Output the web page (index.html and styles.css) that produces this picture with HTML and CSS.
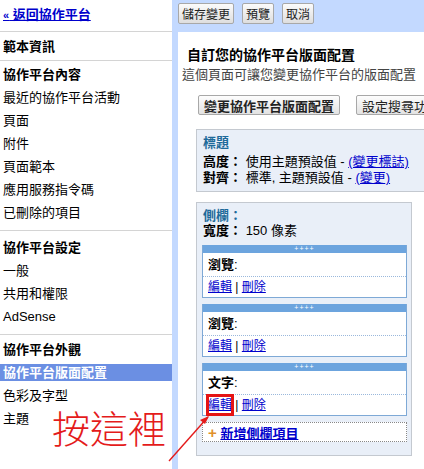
FILE: index.html
```html
<!DOCTYPE html>
<html lang="zh-Hant">
<head>
    <meta charset="UTF-8">
    <meta name="viewport" content="width=device-width, initial-scale=1.0">
    <title>自訂您的協作平台版面配置</title>
    <link rel="stylesheet" href="styles.css">
</head>
<body>
    <div class="page">
        <nav class="side">
            <div class="grp first">
                <a class="back" href="#"><span class="raquo">«</span> 返回協作平台</a>
            </div>
            <div class="grp">
                <div class="hd">範本資訊</div>
            </div>
            <div class="grp">
                <div class="hd">協作平台內容</div>
                <div class="it">最近的協作平台活動</div>
                <div class="it">頁面</div>
                <div class="it">附件</div>
                <div class="it">頁面範本</div>
                <div class="it">應用服務指令碼</div>
                <div class="it">已刪除的項目</div>
            </div>
            <div class="grp set">
                <div class="hd">協作平台設定</div>
                <div class="it">一般</div>
                <div class="it">共用和權限</div>
                <div class="it">AdSense</div>
            </div>
            <div class="grp last">
                <div class="hd">協作平台外觀</div>
                <div class="it sel">協作平台版面配置</div>
                <div class="it">色彩及字型</div>
                <div class="it">主題</div>
            </div>
        </nav>

        <div class="main">
            <div class="toolbar">
                <button class="tb">儲存變更</button>
                <button class="tb">預覽</button>
                <button class="tb">取消</button>
            </div>
            <div class="content">
                <h1 class="title">自訂您的協作平台版面配置</h1>
                <p class="desc">這個頁面可讓您變更協作平台的版面配置</p>
                <div class="actions">
                    <button class="act bold">變更協作平台版面配置</button>
                    <button class="act">設定搜尋功能</button>
                </div>

                <div class="box head-box">
                    <div class="box-title">標題</div>
                    <div class="row"><b>高度：</b> 使用主題預設值 - <a href="#">(變更標誌)</a></div>
                    <div class="row"><b>對齊：</b> 標準, 主題預設值 - <a href="#">(變更)</a></div>
                </div>

                <div class="box side-box">
                    <div class="box-title">側欄：</div>
                    <div class="row"><b>寬度：</b> 150 像素</div>

                    <div class="widget">
                        <div class="grip">++++</div>
                        <div class="w-name"><b>瀏覽</b>:</div>
                        <div class="w-links"><a href="#">編輯</a> | <a href="#">刪除</a></div>
                    </div>
                    <div class="widget">
                        <div class="grip">++++</div>
                        <div class="w-name"><b>瀏覽</b>:</div>
                        <div class="w-links"><a href="#">編輯</a> | <a href="#">刪除</a></div>
                    </div>
                    <div class="widget">
                        <div class="grip">++++</div>
                        <div class="w-name"><b>文字</b>:</div>
                        <div class="w-links"><a class="mark" href="#">編輯</a> | <a href="#">刪除</a></div>
                    </div>

                    <div class="add">
                        <span class="plus">+</span> <a href="#">新增側欄項目</a>
                    </div>
                </div>
            </div>
        </div>

        <div class="note">按這裡</div>
        <svg class="arrow" width="60" height="60" viewBox="0 0 60 60">
            <line x1="7" y1="56" x2="46" y2="12" stroke="#e41b1b" stroke-width="1.4"/>
            <path d="M47 11 L38 15 L43 19 Z" fill="#e41b1b"/>
        </svg>
    </div>
</body>
</html>
```

FILE: styles.css
```css
body{
    margin: 0;
    font-family: "Liberation Sans", "Noto Sans CJK TC", sans-serif;
    font-size: 13px;
    color: #000;
    overflow: hidden;
}
a{
    color: #0000cc;
}
.page{
    position: relative;
    display: flex;
    height: 469px;
}

/* left menu */
.side{
    width: 172px;
    flex-shrink: 0;
    background: #fff;
}
.grp{
    display: flex;
    flex-direction: column;
    gap: 6px;
    padding: 5px 0 9px;
    border-bottom: 1px solid #d4d4d4;
    line-height: 17px;
}
.grp.first{
    padding: 6px 0 7px;
}
.grp.first + .grp{
    padding: 6px 0 5px;
}
.grp.set{
    padding: 8px 0 9px;
}
.grp.last{
    padding: 6px 0;
    border-bottom: none;
}
.back{
    padding-left: 3px;
    font-weight: bold;
}
.raquo{
    font-size: 11px;
}
.hd{
    padding-left: 3px;
    font-weight: bold;
}
.it{
    padding-left: 3px;
}
.it.sel{
    background: #6b8fe3;
    color: #fff;
    font-weight: bold;
}

/* right side */
.main{
    flex: 1;
    display: flex;
    flex-direction: column;
    background: #c3d9ff;
    min-width: 0;
}
.toolbar{
    height: 32px;
    box-sizing: border-box;
    padding: 3px 6px 0;
    display: flex;
    gap: 8px;
    align-items: flex-start;
}
.tb{
    height: 21px;
    padding: 0 3px;
    font-family: inherit;
    font-size: 12px;
    color: #222;
    background: linear-gradient(#fbfbfb, #dedede);
    border: 1px solid #a8a8a8;
    border-radius: 2px;
}
.content{
    flex: 1;
    margin-left: 6px;
    background: #fff;
    padding: 14px 0 0 4px;
    overflow: hidden;
}
.title{
    margin: 0 0 2px 5px;
    font-size: 14px;
    line-height: 18px;
}
.desc{
    margin: 0 0 11px;
    line-height: 18px;
    color: #444;
}
.actions{
    display: flex;
    gap: 16px;
    margin-left: 16px;
    margin-bottom: 14px;
    white-space: nowrap;
}
.act{
    height: 20px;
    padding: 0 5px;
    font-family: inherit;
    font-size: 13px;
    color: #222;
    background: linear-gradient(#fdfdfd, #e2e2e2);
    border: 1px solid #a8a8a8;
    border-radius: 2px;
    flex-shrink: 0;
}
.act.bold{
    font-weight: bold;
}

.box{
    margin-left: 14px;
    background: #e9eff8;
    border: 1px solid #c4c9d0;
}
.head-box{
    width: 260px;
    padding: 5px 6px;
    white-space: nowrap;
    line-height: 16px;
}
.head-box .box-title{
    margin-bottom: 3px;
}
.box-title{
    color: #1d6a9a;
    font-weight: bold;
}
.side-box{
    width: 214px;
    margin-top: 10px;
    padding: 5px 0 13px;
    line-height: 15px;
}
.side-box .box-title,
.side-box > .row{
    padding-left: 6px;
}
.widget{
    width: 203px;
    margin: 6px 0 0 5px;
    background: #fff;
    border: 1px solid #7ea9d6;
    border-top: none;
    font-size: 12px;
}
.side-box > .row + .widget{
    margin-top: 7px;
}
.grip{
    height: 8px;
    background: #6ca4de;
    color: #fff;
    font-size: 7px;
    line-height: 8px;
    text-align: center;
    letter-spacing: 1px;
}
.w-name{
    height: 23px;
    line-height: 23px;
    padding-left: 5px;
    border-bottom: 1px dotted #9ab8dc;
    font-size: 13px;
}
.w-links{
    height: 20px;
    line-height: 20px;
    padding-left: 5px;
}
.mark{
    display: inline-block;
    line-height: 18px;
    outline: 3px solid #e51414;
    outline-offset: -1px;
}
.add{
    width: 203px;
    height: 20px;
    margin: 6px 0 0 5px;
    padding-left: 5px;
    box-sizing: border-box;
    border: 1px dotted #888;
    background: #fff;
    line-height: 20px;
    font-weight: bold;
    width: 205px;
}
.plus{
    color: #e0902a;
    font-size: 15px;
}

/* red hand-drawn note over the page */
.note{
    position: absolute;
    left: 52px;
    top: 402px;
    font-family: "Noto Sans CJK TC", sans-serif;
    font-size: 38px;
    font-weight: 300;
    line-height: 50px;
    color: #e41b1b;
}
.arrow{
    position: absolute;
    left: 162px;
    top: 405px;
}
```
